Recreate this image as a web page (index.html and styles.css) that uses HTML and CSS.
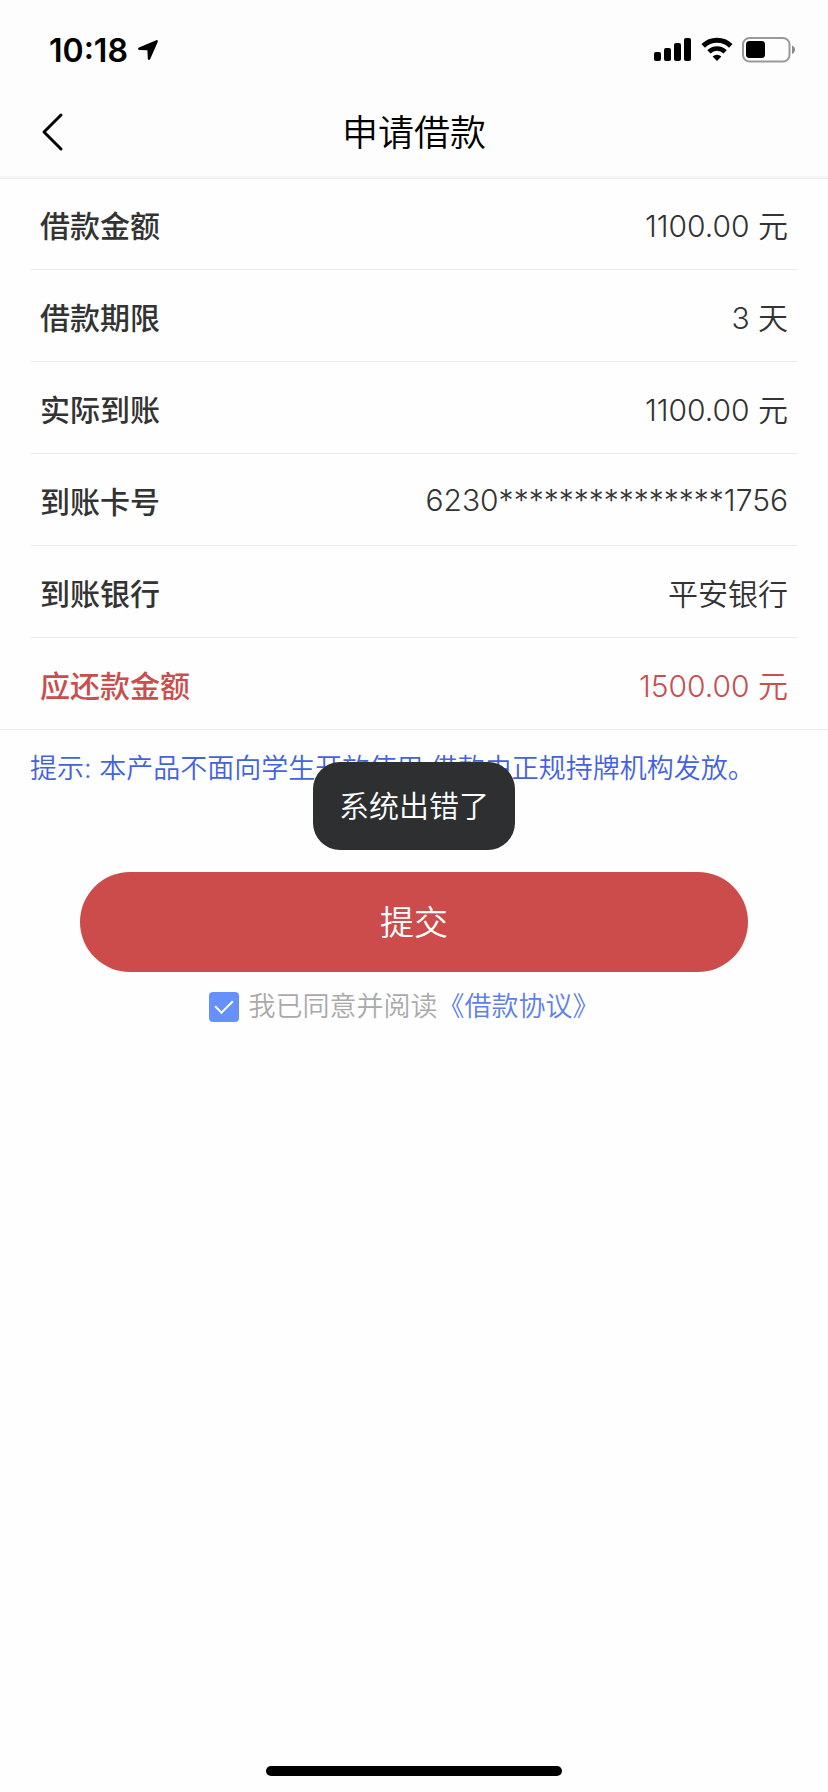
FILE: index.html
```html
<!DOCTYPE html>
<html lang="zh-CN">
<head>
    <meta charset="UTF-8">
    <meta name="viewport" content="width=device-width, initial-scale=1.0">
    <title>申请借款</title>
    <link rel="stylesheet" href="styles.css">
</head>
<body>

<header class="header">
    <div class="status-bar">
        <div class="status-left">
            <span class="time">10:18</span>
            <svg class="location" width="22" height="22" viewBox="0 0 22 22" aria-hidden="true">
                <path d="M19.2 1.2 2 8.6c-1.5.7-1.3 2.2.2 2.3l8.2.3.4 8.4c.1 1.7 1.8 1.8 2.4.3l7.5-17c.5-1.3-.3-2.1-1.5-1.7z"/>
            </svg>
        </div>
        <div class="status-right">
            <svg width="38" height="26" viewBox="0 0 38 26" aria-hidden="true">
                <rect x="0" y="15" width="7" height="9" rx="2"/>
                <rect x="10" y="11" width="7" height="13" rx="2"/>
                <rect x="20" y="6" width="7" height="18" rx="2"/>
                <rect x="30" y="1" width="7" height="23" rx="2"/>
            </svg>
            <svg width="32" height="26" viewBox="0 0 32 26" aria-hidden="true">
                <path d="M2.2 8.9a19.6 19.6 0 0 1 27.6 0" fill="none" stroke="#000" stroke-width="5"/>
                <path d="M7.9 14.9a11.5 11.5 0 0 1 16.2 0" fill="none" stroke="#000" stroke-width="4.6"/>
                <path d="M11.6 19.4a6.4 6.4 0 0 1 8.8 0L16 23.9z"/>
            </svg>
            <svg width="54" height="26" viewBox="0 0 54 26" aria-hidden="true">
                <rect x="1" y="1" width="46.500" height="23.500" rx="6.500" fill="none" stroke="#999" stroke-width="2"/>
                <rect x="4" y="4" width="19" height="17" rx="3.500"/>
                <path d="M50 8.500c4 1.800 4 6.700 0 8.500z" fill="#8a8a8a"/>
            </svg>
        </div>
    </div>
    <nav class="nav">
        <button type="button" class="back" aria-label="返回">
            <svg width="24" height="40" viewBox="0 0 24 40" aria-hidden="true">
                <path d="M20 3 3 20l17 17" fill="none" stroke="#000" stroke-width="3" stroke-linecap="round" stroke-linejoin="round"/>
            </svg>
        </button>
        <h1 class="title">申请借款</h1>
    </nav>
</header>

<main>
    <dl class="list">
        <div class="row">
            <dt>借款金额</dt>
            <dd>1100.00 元</dd>
        </div>
        <div class="row">
            <dt>借款期限</dt>
            <dd>3 天</dd>
        </div>
        <div class="row">
            <dt>实际到账</dt>
            <dd>1100.00 元</dd>
        </div>
        <div class="row">
            <dt>到账卡号</dt>
            <dd>6230***************1756</dd>
        </div>
        <div class="row">
            <dt>到账银行</dt>
            <dd>平安银行</dd>
        </div>
        <div class="row repay">
            <dt>应还款金额</dt>
            <dd>1500.00 元</dd>
        </div>
    </dl>

    <p class="hint">提示: 本产品不面向学生开放使用,借款由正规持牌机构发放。</p>

    <button type="button" class="submit">提交</button>

    <div class="agreement">
        <input type="checkbox" id="agree" checked>
        <label for="agree">我已同意并阅读</label><a href="#">《借款协议》</a>
    </div>
</main>

<div class="toast" role="alert">系统出错了</div>

<div class="home-indicator"></div>

</body>
</html>
```
FILE: styles.css
```css
* {
    box-sizing: border-box;
}

body {
    margin: 0;
    min-height: 100vh;
    display: flex;
    flex-direction: column;
    font-family: Inter, "Noto Sans CJK SC", sans-serif;
    font-size: 30px;
    font-weight: 350;
    color: #333;
    background: #fefefe;
}

.header {
    background: #fdfdfd;
    border-bottom: 2px solid #f5f5f5;
    color: #000;
}

.status-bar {
    display: flex;
    justify-content: space-between;
    align-items: center;
    height: 88px;
    padding: 12px 32px 0 49px;
}

.status-left,
.status-right {
    display: flex;
    align-items: center;
    gap: 9px;
}

.time {
    font-size: 32px;
    font-weight: 600;
}

.nav {
    display: grid;
    grid-template-columns: 80px 1fr 80px;
    align-items: center;
    height: 88px;
}

.back {
    padding: 0 0 0 41px;
    border: none;
    background: none;
    text-align: left;
    cursor: pointer;
}

.back svg {
    display: block;
}

.title {
    margin: 0;
    padding-bottom: 5px;
    font-size: 36px;
    font-weight: 350;
    text-align: center;
}

.list {
    margin: 0;
    padding: 0 30px;
    border-top: 1px solid #eaeaea;
    border-bottom: 1px solid #ebebeb;
}

.row {
    display: flex;
    justify-content: space-between;
    align-items: center;
    height: 92px;
    padding: 0 10px;
    border-bottom: 1px solid #ebebeb;
}

.row:first-child,
.row:last-child {
    height: 91px;
}

.row:last-child {
    border-bottom: none;
}

.row dt {
    font-weight: 500;
}

.row dd {
    margin: 0;
}

.repay {
    color: #c94f4f;
}

.hint {
    margin: 0;
    padding: 19px 30px 0;
    font-size: 27px;
    line-height: 40px;
    color: #4462e0;
}

.submit {
    display: block;
    width: calc(100% - 160px);
    height: 100px;
    margin: 83px auto 0;
    padding-bottom: 5px;
    border: none;
    border-radius: 50px;
    background: #cc4b4b;
    color: #fff;
    font-family: inherit;
    font-size: 34px;
    font-weight: 350;
    cursor: pointer;
}

.agreement {
    display: flex;
    justify-content: center;
    align-items: center;
    padding: 15px 20px 0 0;
    font-size: 27px;
    line-height: 40px;
    color: #aaa;
}

.agreement input {
    appearance: none;
    width: 30px;
    height: 30px;
    margin: 0 10px 0 0;
    border-radius: 4px;
    background: #6691fc;
    display: grid;
    place-items: center;
}

/* tick drawn with two borders */
.agreement input:checked::before {
    content: "";
    width: 8px;
    height: 15px;
    margin-bottom: 5px;
    border: solid #fff;
    border-width: 0 2px 2px 0;
    transform: rotate(45deg);
}

.agreement a {
    color: #6080e8;
    text-decoration: none;
}

.toast {
    position: fixed;
    top: 45%;
    left: 50%;
    transform: translate(-50%, -50%);
    padding: 22px 26px;
    border-radius: 27px;
    background: #2e2f31;
    color: #fff;
    line-height: 44px;
    white-space: nowrap;
}

.home-indicator {
    width: 296px;
    height: 10px;
    margin: auto auto 16px;
    border-radius: 5px;
    background: #000;
}
```
